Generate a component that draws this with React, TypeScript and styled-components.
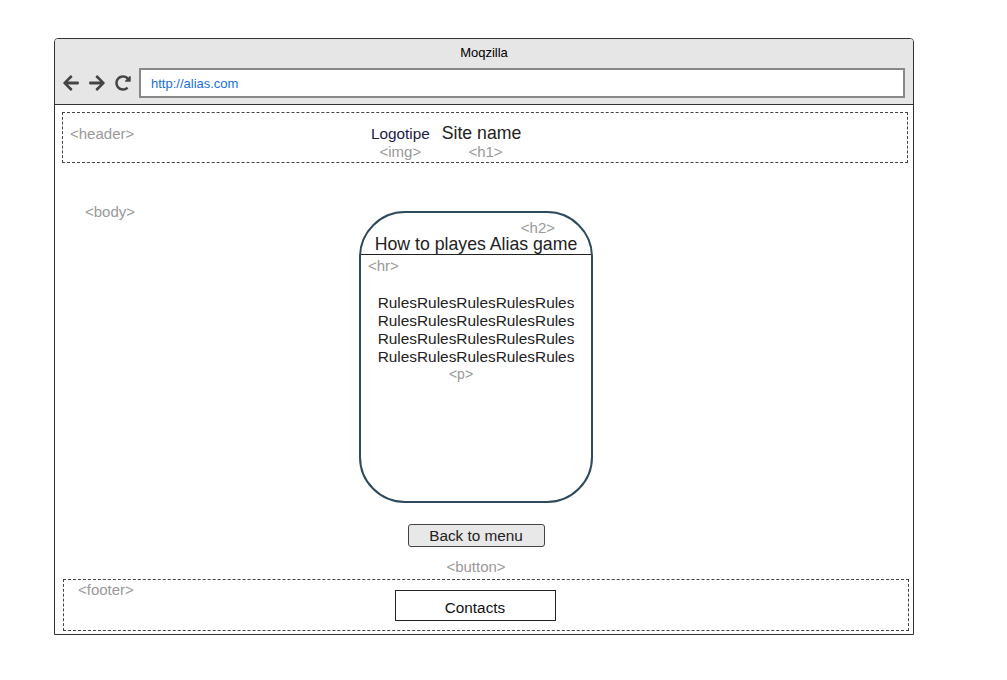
import styled, { createGlobalStyle } from 'styled-components';
import { FaArrowLeft, FaArrowRight, FaRedoAlt } from 'react-icons/fa';

const GlobalStyle = createGlobalStyle`
  body {
    margin: 0;
    background: #fff;
    font-family: "Liberation Sans", Arial, sans-serif;
  }
`;

const rules = Array.from({ length: 4 }, () => 'Rules'.repeat(5));

const App = () => {
  return (
    <>
      <GlobalStyle />
      <Page>
        <Window>
          <TitleBar>
            <Title>Moqzilla</Title>
            <Toolbar>
              <NavIcon><FaArrowLeft size={18} /></NavIcon>
              <NavIcon><FaArrowRight size={18} /></NavIcon>
              <NavIcon><FaRedoAlt size={16} /></NavIcon>
              <AddressBar>http://alias.com</AddressBar>
            </Toolbar>
          </TitleBar>

          <Content>
            <Header>
              <Tag $left={7} $top={13}>&lt;header&gt;</Tag>
              <Brand>
                <Logo>Logotipe</Logo>
                <Note $top={2}>&lt;img&gt;</Note>
              </Brand>
              <Brand>
                <SiteName>Site name</SiteName>
                <Note $shift={8}>&lt;h1&gt;</Note>
              </Brand>
            </Header>

            <Tag $left={30} $top={99}>&lt;body&gt;</Tag>

            <Main>
              <Card>
                <CardHead>
                  <HeadNote>&lt;h2&gt;</HeadNote>
                  <CardTitle>How to playes Alias game</CardTitle>
                </CardHead>
                <HrNote>&lt;hr&gt;</HrNote>
                <Rules>
                  {rules.map((line, i) => (
                    <div key={i}>{line}</div>
                  ))}
                </Rules>
                <PNote>&lt;p&gt;</PNote>
              </Card>
              <BackButton>Back to menu</BackButton>
              <ButtonNote>&lt;button&gt;</ButtonNote>
            </Main>

            <Footer>
              <Tag $left={14} $top={2}>&lt;footer&gt;</Tag>
              <Contacts>Contacts</Contacts>
            </Footer>
          </Content>
        </Window>
      </Page>
    </>
  );
};

const Page = styled.div`
  padding: 38px 0 0 54px;
`;

const Window = styled.div`
  width: 858px;
  border: 1px solid #333;
  border-radius: 4px 4px 0 0;
  background: #fff;
`;

const TitleBar = styled.div`
  background: #e6e6e6;
  border-bottom: 1px solid #333;
  border-radius: 3px 3px 0 0;
  padding: 7px 0 6px;
`;

const Title = styled.div`
  text-align: center;
  font-size: 13px;
  line-height: 14px;
  color: #000;
`;

const Toolbar = styled.div`
  display: flex;
  align-items: center;
  margin-top: 8px;
  padding: 0 8px 0 7px;
  gap: 8px;
`;

const NavIcon = styled.span`
  display: flex;
  align-items: center;
  justify-content: center;
  width: 18px;
  height: 30px;
  color: #444;
`;

const AddressBar = styled.div`
  flex: 1;
  height: 26px;
  margin-left: -1px;
  border: 2px solid #888;
  background: #fff;
  display: flex;
  align-items: center;
  padding-left: 10px;
  font-size: 13px;
  color: #1a6fd8;
`;

const Content = styled.div`
  position: relative;
  padding: 7px 4px 3px 7px;
`;

const Tag = styled.span<{ $left: number; $top: number }>`
  position: absolute;
  left: ${({ $left }) => $left}px;
  top: ${({ $top }) => $top}px;
  font-size: 15px;
  line-height: 16px;
  color: #999;
`;

const Header = styled.div`
  position: relative;
  display: flex;
  align-items: flex-start;
  gap: 12px;
  margin-right: 1px;
  padding: 10px 0 0 308px;
  box-sizing: border-box;
  height: 51px;
  border: 1px dashed #444;
`;

const Brand = styled.div`
  display: flex;
  flex-direction: column;
  align-items: center;
`;

const Logo = styled.div`
  margin-top: 2px;
  font-size: 15.3px;
  line-height: 17px;
  color: #1c1c4a;
`;

const SiteName = styled.div`
  font-size: 17.7px;
  line-height: 21px;
  color: #222;
`;

const Note = styled.div<{ $shift?: number; $top?: number }>`
  margin-top: ${({ $top }) => $top ?? 0}px;
  margin-left: ${({ $shift }) => $shift ?? 0}px;
  font-size: 15px;
  line-height: 15px;
  color: #999;
`;

const Main = styled.div`
  display: flex;
  flex-direction: column;
  align-items: center;
  margin-top: 48px;
  padding-right: 19px;
`;

const Card = styled.div`
  width: 230px;
  height: 288px;
  border: 2px solid #2e4a5c;
  border-radius: 46px;
  display: flex;
  flex-direction: column;
`;

const CardHead = styled.div`
  padding-top: 8px;
  border-bottom: 1px solid #222;
  display: flex;
  flex-direction: column;
`;

const HeadNote = styled.div`
  align-self: flex-end;
  padding-right: 36px;
  font-size: 15px;
  line-height: 13px;
  color: #999;
`;

const CardTitle = styled.div`
  text-align: center;
  font-size: 17.7px;
  line-height: 20px;
  color: #222;
`;

const HrNote = styled.div`
  padding-left: 7px;
  margin-top: 3px;
  font-size: 15px;
  line-height: 15px;
  color: #999;
`;

const Rules = styled.div`
  margin-top: 21px;
  text-align: center;
  font-size: 15.4px;
  line-height: 18px;
  color: #222;
`;

const PNote = styled.div`
  margin-top: 2px;
  text-align: center;
  padding-right: 30px;
  font-size: 14px;
  line-height: 12px;
  color: #999;
`;

const BackButton = styled.button`
  margin-top: 21px;
  width: 137px;
  height: 23px;
  padding: 0;
  background: #e8e8e8;
  border: 1px solid #444;
  border-radius: 3px;
  font-family: "Liberation Sans", Arial, sans-serif;
  font-size: 15.3px;
  color: #222;
`;

const ButtonNote = styled.div`
  margin-top: 12px;
  font-size: 15px;
  line-height: 16px;
  color: #999;
`;

const Footer = styled.div`
  position: relative;
  margin: 4px 0 0 1px;
  height: 52px;
  box-sizing: border-box;
  border: 1px dashed #444;
  display: flex;
  justify-content: center;
  padding: 10px 22px 0 0;
`;

const Contacts = styled.div`
  width: 159px;
  height: 26px;
  border: 1px solid #222;
  display: flex;
  align-items: flex-end;
  justify-content: center;
  padding-bottom: 3px;
  font-size: 15.3px;
  color: #111;
`;

export default App;
